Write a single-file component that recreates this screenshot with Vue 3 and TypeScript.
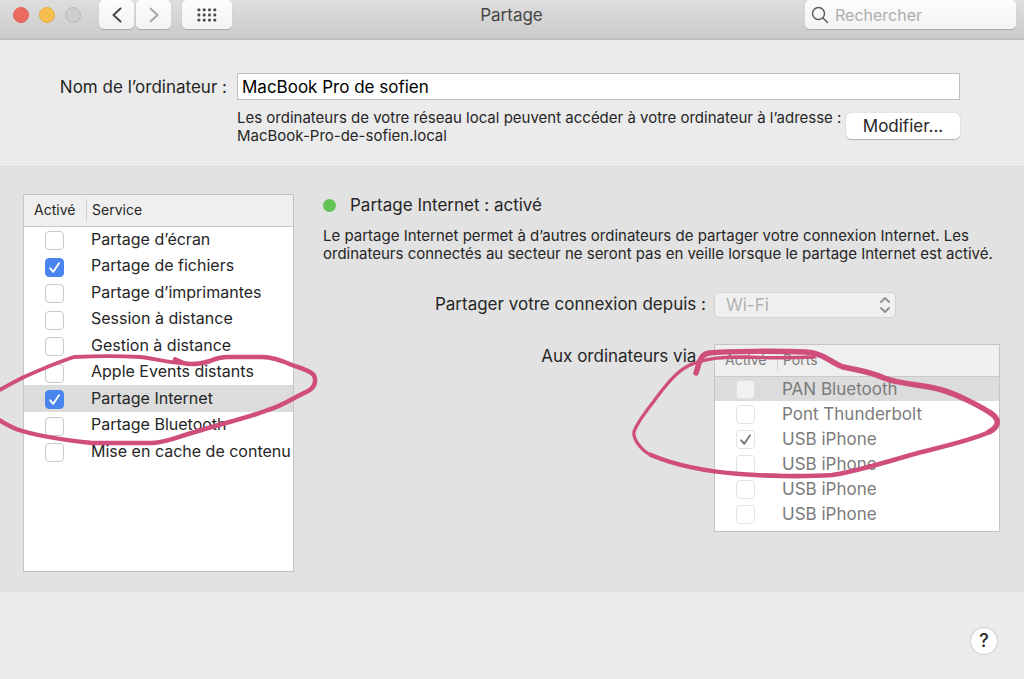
<script setup lang="ts">
import { ref } from 'vue'

interface Item {
  id: string
  name: string
  enabled: boolean
}

const computerName = ref('MacBook Pro de sofien')
const search = ref('')
const source = ref('Wi-Fi')
const selectedService = ref('internet')
const selectedPort = 'pan'

const services = ref<Item[]>([
  { id: 'screen', name: 'Partage d’écran', enabled: false },
  { id: 'files', name: 'Partage de fichiers', enabled: true },
  { id: 'printers', name: 'Partage d’imprimantes', enabled: false },
  { id: 'session', name: 'Session à distance', enabled: false },
  { id: 'management', name: 'Gestion à distance', enabled: false },
  { id: 'events', name: 'Apple Events distants', enabled: false },
  { id: 'internet', name: 'Partage Internet', enabled: true },
  { id: 'bluetooth', name: 'Partage Bluetooth', enabled: false },
  { id: 'cache', name: 'Mise en cache de contenu', enabled: false },
])

const ports = ref<Item[]>([
  { id: 'pan', name: 'PAN Bluetooth', enabled: false },
  { id: 'thunderbolt', name: 'Pont Thunderbolt', enabled: false },
  { id: 'usb1', name: 'USB iPhone', enabled: true },
  { id: 'usb2', name: 'USB iPhone', enabled: false },
  { id: 'usb3', name: 'USB iPhone', enabled: false },
  { id: 'usb4', name: 'USB iPhone', enabled: false },
])

const dotColumns = [0, 1, 2, 3]
const dotRows = [0, 1, 2]
</script>

<template>
  <div class="window">
    <header class="toolbar">
      <div class="toolbar-left">
        <div class="lights">
          <button class="light red" type="button" aria-label="Fermer"></button>
          <button class="light yellow" type="button" aria-label="Réduire"></button>
          <button class="light off" type="button" aria-label="Agrandir" disabled></button>
        </div>
        <div class="nav">
          <button class="tool" type="button" aria-label="Précédent">
            <svg width="12" height="18" viewBox="0 0 12 18"><path d="M9.500 2.500 2.500 9l7 6.500" fill="none" stroke="#484848" stroke-width="2" stroke-linecap="round" stroke-linejoin="round" /></svg>
          </button>
          <button class="tool" type="button" aria-label="Suivant">
            <svg width="12" height="18" viewBox="0 0 12 18"><path d="M2.500 2.500 9.500 9l-7 6.500" fill="none" stroke="#a9a9a9" stroke-width="2" stroke-linecap="round" stroke-linejoin="round" /></svg>
          </button>
        </div>
        <button class="tool wide" type="button" aria-label="Tout afficher">
          <svg width="20" height="14" viewBox="0 0 20 14" fill="#4a4a4a">
            <template v-for="r in dotRows" :key="r">
              <rect v-for="c in dotColumns" :key="c" :x="c * 5.3 + 0.5" :y="r * 5.2 + 0.4" width="2.8" height="2.8" rx="0.8" />
            </template>
          </svg>
        </button>
      </div>
      <h1 class="title">Partage</h1>
      <label class="search">
        <svg width="18" height="18" viewBox="0 0 18 18" fill="none" stroke="#5c5c5c" stroke-width="1.500"><circle cx="7.500" cy="7.500" r="6" /><path d="m12 12 4.500 4.500" stroke-linecap="round" /></svg>
        <input v-model="search" type="text" placeholder="Rechercher" aria-label="Rechercher" />
      </label>
    </header>

    <section class="identity">
      <label class="label" for="computer-name">Nom de l’ordinateur :</label>
      <input id="computer-name" v-model="computerName" class="name-input" type="text" />
      <div class="address">
        <p class="note">Les ordinateurs de votre réseau local peuvent accéder à votre ordinateur à l’adresse :<br />MacBook-Pro-de-sofien.local</p>
        <button class="modify" type="button">Modifier...</button>
      </div>
    </section>

    <main class="content">
      <div class="services">
        <table class="list service-list">
          <thead>
            <tr><th class="check-col" scope="col">Activé</th><th scope="col">Service</th></tr>
          </thead>
          <tbody>
            <tr v-for="s in services" :key="s.id" :class="{ selected: s.id === selectedService }" @click="selectedService = s.id">
              <td class="check-col"><input :id="s.id" v-model="s.enabled" class="check" type="checkbox" /></td>
              <td><label :for="s.id">{{ s.name }}</label></td>
            </tr>
          </tbody>
        </table>
        <svg class="ink service-ink" width="320" height="100" viewBox="0 350 320 100" aria-hidden="true">
          <path d="M175 360C184 365 197 365 210 361C217 358 222 357 228 357H262C273 357 283 361 292 365C303 369 315 372 315 379C316 388 309 391 300 395C290 400 281 406 268 410C247 418 217 425 195 432C180 436 166 443 152 443H92C73 441 36 436 16 429C9 426 3 423 -4 418" stroke-width="4.500" />
          <path d="M-4 392C5 387 14 382 24 377C42 369 58 362 74 357C96 356 122 356 140 357C152 358 163 362 181 363M175 359L182 362" stroke-width="3.800" />
        </svg>
      </div>

      <div class="detail">
        <h2 class="status"><span class="dot"></span>Partage Internet : activé</h2>
        <p class="note">Le partage Internet permet à d’autres ordinateurs de partager votre connexion Internet. Les<br />ordinateurs connectés au secteur ne seront pas en veille lorsque le partage Internet est activé.</p>
        <div class="form">
          <label class="label" for="source">Partager votre connexion depuis :</label>
          <div class="select-wrap">
            <select id="source" v-model="source" disabled><option>Wi-Fi</option></select>
            <svg width="12" height="18" viewBox="0 0 12 18" fill="none" stroke="#939393" stroke-width="2" stroke-linecap="round" stroke-linejoin="round"><path d="m2 6 4-4 4 4M2 12l4 4 4-4" /></svg>
          </div>
          <span id="ports-label" class="label">Aux ordinateurs via :</span>
          <div class="ports">
            <table class="list port-list" aria-labelledby="ports-label">
              <thead>
                <tr><th class="check-col" scope="col">Activé</th><th scope="col">Ports</th></tr>
              </thead>
              <tbody>
                <tr v-for="p in ports" :key="p.id" :class="{ selected: p.id === selectedPort }">
                  <td class="check-col"><input :id="p.id" v-model="p.enabled" class="check" type="checkbox" disabled /></td>
                  <td><label :for="p.id">{{ p.name }}</label></td>
                </tr>
              </tbody>
            </table>
            <svg class="ink port-ink" width="380" height="140" viewBox="625 345 380 140" aria-hidden="true">
              <path d="M696 373C699 364 700 354 709 353C728 351 780 351 806 352C824 353 831 363 843 367C857 370 868 371 884 378C902 385 922 384 942 390C956 394 978 405 989 412C1001 419 999 427 989 432" stroke-width="5.500" />
              <path d="M989 432C973 440 941 447 918 453C889 461 855 472 832 475C803 477 762 476 740 474C699 471 670 463 651 455" stroke-width="4.600" />
              <path d="M651 455C640 450 633 438 634 432C636 424 647 410 654 401C665 386 676 372 688 366C706 357 728 357 745 357C768 358 792 358 814 357" stroke-width="3.300" />
            </svg>
          </div>
        </div>
      </div>
    </main>

    <footer class="footer">
      <button class="help" type="button" aria-label="Aide">?</button>
    </footer>
  </div>
</template>

<style>
body {
  margin: 0;
  background: #ebebeb;
}
</style>

<style scoped>
.window {
  display: flex;
  flex-direction: column;
  min-height: 100vh;
  overflow: hidden;
  background: #ebebeb;
  color: #262626;
  font-family: Inter, "Liberation Sans", sans-serif;
  font-size: 17px;
  line-height: 20px;
}
*,
*::before {
  box-sizing: border-box;
}
button,
input,
select {
  margin: 0;
  padding: 0;
  border: 0;
  font: inherit;
  color: inherit;
}
h1,
h2,
p {
  margin: 0;
  font-weight: 400;
}

.toolbar {
  display: grid;
  grid-template-columns: 1fr auto 1fr;
  align-items: start;
  height: 40px;
  padding: 0 8px 0 13px;
  background: linear-gradient(#dedede, #cbcbcb);
  border-bottom: 2px solid #bebebe;
}
.toolbar-left {
  display: flex;
  gap: 11px;
}
.lights {
  display: flex;
  align-items: center;
  gap: 10px;
  width: 75px;
  height: 29px;
}
.light {
  width: 16px;
  height: 16px;
  border-radius: 50%;
}
.red {
  background: #ed6a5f;
  border: 1px solid #e0625a;
}
.yellow {
  background: #f6be4f;
  border: 1px solid #e2b048;
}
.off {
  background: #cdcdcd;
  border: 1px solid #b9b9b9;
}
.nav {
  display: flex;
  gap: 2px;
}
.tool {
  display: flex;
  align-items: center;
  justify-content: center;
  width: 35px;
  height: 29px;
  border-radius: 5px;
  background: linear-gradient(#fcfcfc, #f3f3f3);
  box-shadow: 0 1px 1px #a8a8a8;
}
.wide {
  width: 50px;
}
.title {
  padding-right: 6px;
  font-size: 17px;
  line-height: 30px;
  color: #474747;
}
.search {
  justify-self: end;
  display: flex;
  align-items: center;
  gap: 6px;
  width: 211px;
  height: 29px;
  padding-left: 6px;
  border-radius: 5px;
  background: linear-gradient(#fcfcfc, #f3f3f3);
  box-shadow: 0 1px 1px #a8a8a8;
}
.search input {
  flex: 1;
  min-width: 0;
  background: transparent;
  outline: 0;
  font-size: 16px;
}
.search input::placeholder {
  color: #adadad;
}

.identity {
  display: grid;
  grid-template-columns: 205px 1fr;
  column-gap: 10px;
  align-items: center;
  padding: 33px 64px 21px 22px;
}
.label {
  text-align: right;
  white-space: nowrap;
}
.name-input {
  width: 100%;
  height: 27px;
  padding: 0 4px;
  border: 1px solid #bfbfbf;
  background: #fff;
  color: #000;
}
.address {
  grid-column: 2;
  display: flex;
  justify-content: space-between;
  align-items: flex-start;
  padding-top: 9px;
}
.note {
  font-size: 15px;
  line-height: 18px;
  white-space: nowrap;
}
.modify {
  flex: none;
  width: 114px;
  height: 26px;
  margin-top: 4px;
  border-radius: 5px;
  background: #fff;
  box-shadow: 0 0 1px #a9a9a9, 0 1px 1px #b4b4b4;
}

.content {
  display: flex;
  gap: 29px;
  padding: 27px 24px 20px 23px;
  border-top: 1px solid #dadada;
  background: #e2e2e2;
}
.services {
  position: relative;
  flex: none;
  width: 271px;
  height: 378px;
  border: 1px solid #c4c4c4;
  background: #fff;
}
.list {
  width: 100%;
  table-layout: fixed;
  border-collapse: collapse;
}
.service-list {
  height: 270px;
  font-size: 16px;
}
.list th {
  height: 31px;
  padding: 0 0 0 6px;
  background: linear-gradient(to right, #d2d2d2 1px, transparent 1px) 0 4px / 100% 22px no-repeat #efefef;
  border-bottom: 1px solid #c9c9c9;
  font-size: 14px;
  font-weight: 400;
  text-align: left;
}
.list th.check-col {
  width: 62px;
  padding-left: 10px;
  background: #efefef;
}
.list td {
  padding: 0 0 0 5px;
  line-height: 22px;
  white-space: nowrap;
}
.service-list td {
  padding-bottom: 2px;
}
.list td.check-col {
  padding: 2px 2px 0 0;
}
.selected {
  background: #dcdcdc;
}
.check {
  display: block;
  width: 19px;
  height: 19px;
  margin: 0 auto;
  appearance: none;
  border: 1px solid #c9c9c9;
  border-radius: 4px;
  background: #fff center / 19px 19px no-repeat;
}
.check:checked {
  border-color: #4a84ee;
  background-color: #4a84ee;
  background-image: url("data:image/svg+xml,%3Csvg xmlns='http://www.w3.org/2000/svg' viewBox='0 0 19 19'%3E%3Cpath d='M5.200 10.300 8.300 13.800 14 5.200' fill='none' stroke='white' stroke-width='1.900' stroke-linecap='round' stroke-linejoin='round'/%3E%3C/svg%3E");
}

.detail {
  flex: 1;
  min-width: 0;
}
.status {
  display: flex;
  align-items: center;
  gap: 14px;
  font-size: 17px;
  line-height: 22px;
}
.dot {
  width: 13px;
  height: 13px;
  border-radius: 50%;
  background: #61c454;
}
.detail .note {
  margin-top: 11px;
}
.form {
  display: grid;
  grid-template-columns: 383px 1fr;
  column-gap: 8px;
  row-gap: 26px;
  margin-top: 29px;
}
.form .label {
  line-height: 24px;
}
.select-wrap {
  display: grid;
  align-items: center;
  width: 182px;
  height: 26px;
}
.select-wrap > * {
  grid-area: 1 / 1;
}
.select-wrap svg {
  justify-self: end;
  margin-right: 5px;
}
.select-wrap select {
  width: 100%;
  height: 26px;
  padding: 0 11px;
  appearance: none;
  border: 1px solid #d2d2d2;
  border-radius: 5px;
  background: #f0f0f0;
  color: #b3b3b3;
  opacity: 1;
}
.ports {
  position: relative;
  height: 188px;
  border: 1px solid #c4c4c4;
  background: #fff;
  color: #7b7b7b;
}
.port-list td {
  height: 25px;
}
.port-list .check {
  border-color: #e2e2e2;
}
.port-list .selected .check {
  background-color: #f1f1f1;
}
.port-list .check:checked {
  background-color: #fff;
  background-image: url("data:image/svg+xml,%3Csvg xmlns='http://www.w3.org/2000/svg' viewBox='0 0 19 19'%3E%3Cpath d='M5.200 10.300 8.300 13.800 14 5.200' fill='none' stroke='%23777777' stroke-width='1.900' stroke-linecap='round' stroke-linejoin='round'/%3E%3C/svg%3E");
}

/* Hand-drawn marks laid over the two lists */
.ink {
  position: absolute;
  pointer-events: none;
  fill: none;
  stroke: #d04e7b;
  stroke-linecap: round;
  stroke-linejoin: round;
}
.service-ink {
  top: 155px;
  left: -24px;
}
.port-ink {
  top: 0;
  left: -90px;
}

.footer {
  display: flex;
  justify-content: flex-end;
  padding: 36px 27px 24px;
}
.help {
  width: 26px;
  height: 26px;
  border-radius: 50%;
  background: #fff;
  box-shadow: 0 0 2px #999;
  font-size: 18px;
  font-weight: 500;
  line-height: 26px;
}
</style>
